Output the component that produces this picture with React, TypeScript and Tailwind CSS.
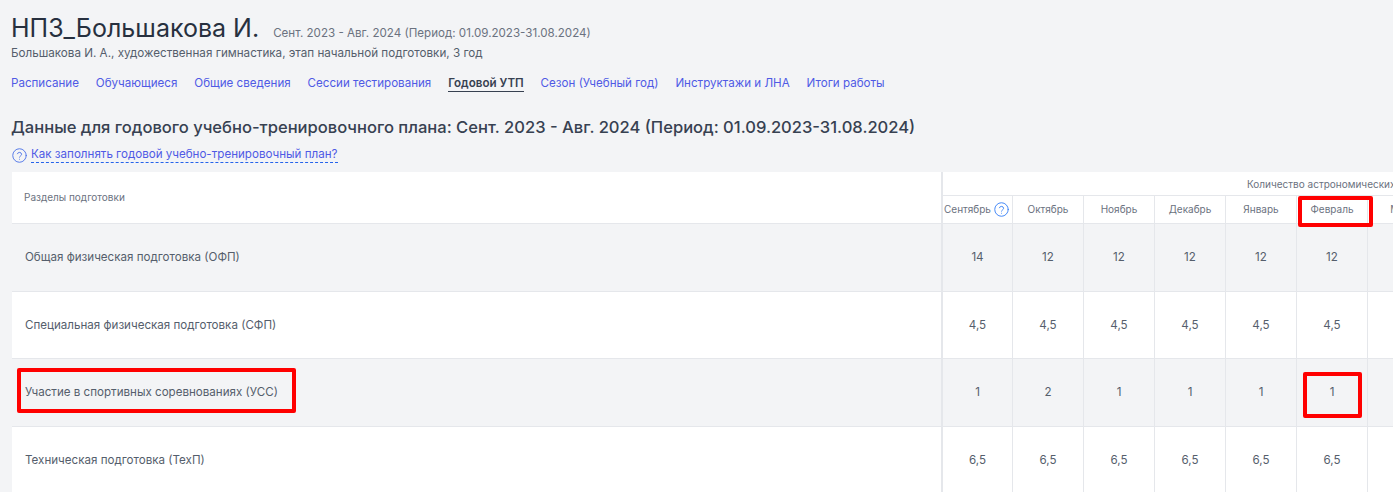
const nav = ["Расписание", "Обучающиеся", "Общие сведения", "Сессии тестирования", "Годовой УТП", "Сезон (Учебный год)", "Инструктажи и ЛНА", "Итоги работы"];
const months = ["Сентябрь", "Октябрь", "Ноябрь", "Декабрь", "Январь", "Февраль", "Март"];
const rows = [
  { name: "Общая физическая подготовка (ОФП)", vals: ["14", "12", "12", "12", "12", "12", ""], h: "h-[68px]", bg: "bg-[#f3f4f6]", pt: "" },
  { name: "Специальная физическая подготовка (СФП)", vals: ["4,5", "4,5", "4,5", "4,5", "4,5", "4,5", ""], h: "h-[67px]", bg: "bg-white", pt: "pt-[2px]" },
  { name: "Участие в спортивных соревнованиях (УСС)", vals: ["1", "2", "1", "1", "1", "1", ""], h: "h-[68px]", bg: "bg-[#f3f4f6]", pt: "" },
  { name: "Техническая подготовка (ТехП)", vals: ["6,5", "6,5", "6,5", "6,5", "6,5", "6,5", ""], h: "h-[68px]", bg: "bg-white", pt: "" },
];

function Help({ className }: { className: string }) {
  return (
    <svg viewBox="0 0 24 24" fill="none" strokeWidth="1.5" strokeLinecap="round" strokeLinejoin="round" className={className}>
      <circle cx="12" cy="12" r="10.8" />
      <path d="M8.7 9.2a3.4 3.4 0 0 1 6.6 1c0 2.2-3.3 2.7-3.3 4.4" />
      <path d="M12 18h.01" />
    </svg>
  );
}

export default function App() {
  return (
    <div className="relative h-[492px] w-[1393px] overflow-hidden bg-[#f3f4f6] font-['Inter',sans-serif] text-[#374151]">
      <div className="pl-[11px] pt-[12px]">
        <div className="flex items-baseline">
          <h1 className="text-[25px] leading-[32px] font-normal text-[#27303f]">НПЗ_Большакова И.</h1>
          <span className="ml-[14px] text-[11.6px] leading-[16px] text-[#6b7280]">Сент. 2023 - Авг. 2024 (Период: 01.09.2023-31.08.2024)</span>
        </div>
        <p className="mt-[1px] text-[11.65px] leading-[16px] text-[#555e6c]">Большакова И. А., художественная гимнастика, этап начальной подготовки, 3 год</p>
        <nav className="mt-[14px] flex gap-[16.9px] text-[11.6px] leading-[16px]">
          {nav.map((n) => (
            <a key={n} className={n === "Годовой УТП" ? "border-b border-[#374151] font-semibold text-[#374151]" : "text-[#4f5ae5]"}>{n}</a>
          ))}
        </nav>
        <h2 className="mt-[23px] text-[16.56px] leading-[24px] font-medium text-[#374151]">Данные для годового учебно-тренировочного плана: Сент. 2023 - Авг. 2024 (Период: 01.09.2023-31.08.2024)</h2>
        <div className="mt-[8px] flex items-center pl-[1px]">
          <Help className="h-[15px] w-[15px] stroke-[#4f74e8]" />
          <a className="ml-[4px] border-b border-dashed border-[#2563eb] text-[11.6px] leading-[15px] text-[#4f5ae5]">Как заполнять годовой учебно-тренировочный план?</a>
        </div>
      </div>

      <div className="ml-[12px] mt-[9px] w-[1450px] bg-white">
        <div className="grid grid-cols-[929px_1fr] border-b border-[#e5e7eb]">
          <div className="flex items-center pl-[12px] text-[10px] text-[#6b7280]">Разделы подготовки</div>
          <div className="border-l-2 border-[#e5e7eb]">
            <div className="h-[24px] border-b border-[#e5e7eb] pl-[304px] pt-[5px] text-[10px] leading-[14px] whitespace-nowrap text-[#6b7280]">Количество астрономических часов</div>
            <div className="flex h-[27px]">
              {months.map((m, i) => (
                <div key={m} className={`flex items-center justify-center border-r border-[#e5e7eb] text-[10px] text-[#6b7280] ${i === 0 ? "w-[70px] gap-[3px] pr-[2px]" : "w-[71px]"}`}>
                  {m}
                  {i === 0 && <Help className="h-[15px] w-[15px] stroke-[#3b82f6]" />}
                </div>
              ))}
            </div>
          </div>
        </div>
        {rows.map((r) => (
          <div key={r.name} className={`grid grid-cols-[929px_1fr] border-b border-[#e5e7eb] ${r.h} ${r.bg}`}>
            <div className={`flex items-center pl-[13px] text-[11.6px] text-[#555e6c] ${r.pt}`}>{r.name}</div>
            <div className="flex border-l-2 border-[#e5e7eb]">
              {r.vals.map((v, i) => (
                <div key={i} className={`flex items-center justify-center border-r border-[#e5e7eb] text-[11.6px] text-[#555e6c] ${r.pt} ${i === 0 ? "w-[70px]" : "w-[71px]"}`}>{v}</div>
              ))}
            </div>
          </div>
        ))}
      </div>

      <div className="absolute left-[1298px] top-[196px] h-[31px] w-[75px] rounded-[2px] border-[4px] border-[#ff0000]" />
      <div className="absolute left-[17px] top-[368px] h-[45px] w-[279px] rounded-[2px] border-[4px] border-[#ff0000]" />
      <div className="absolute left-[1303px] top-[372px] h-[46px] w-[59px] rounded-[2px] border-[4px] border-[#ff0000]" />
    </div>
  );
}
